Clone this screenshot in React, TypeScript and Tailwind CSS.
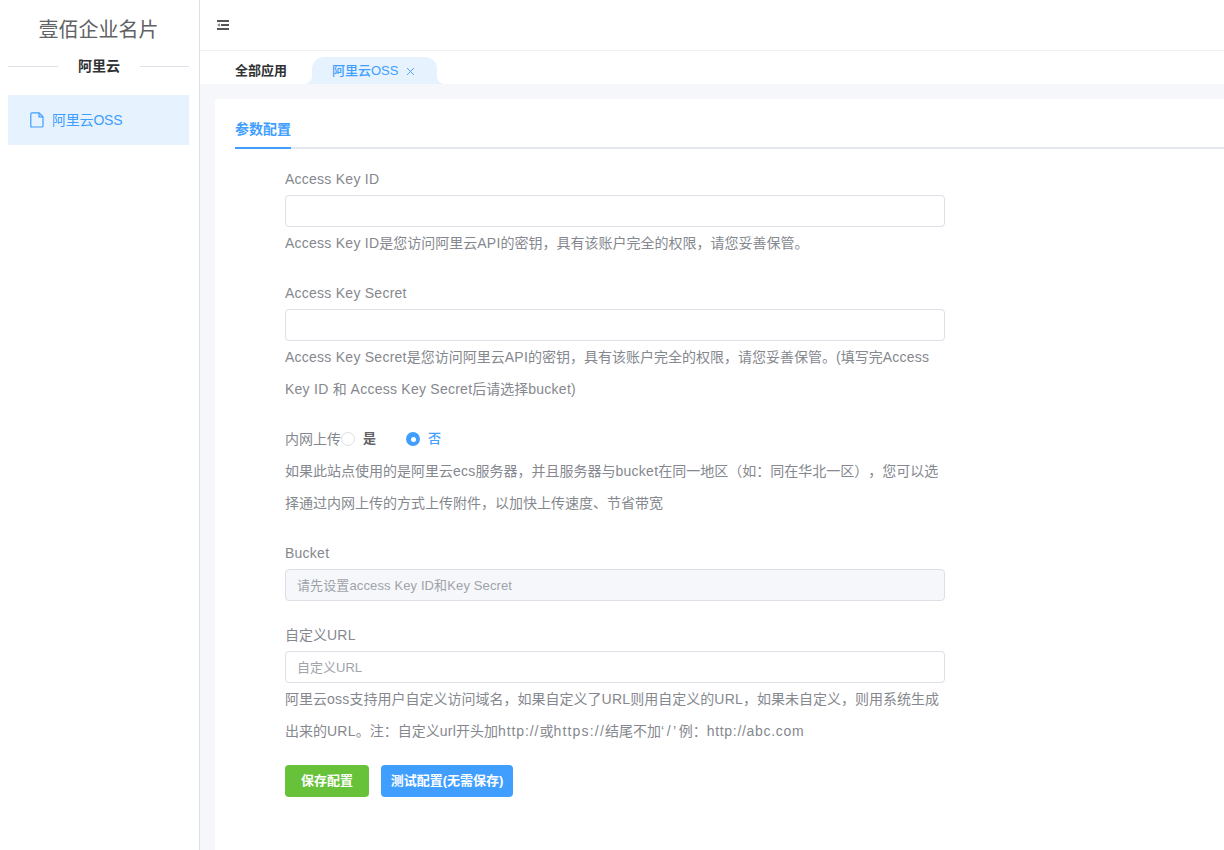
import React from "react";

const fontStack = { fontFamily: '"Liberation Sans", "Noto Sans CJK SC", sans-serif' };

// latin runs are a little wider in the reference than in Liberation Sans
const Mixed = ({ text }: { text: string }) => (
  <>
    {text.split(/([A-Za-z][A-Za-z ]*)/).map((part, i) =>
      /[A-Za-z]/.test(part) ? (
        <span key={i} className="tracking-[0.25px]">
          {part}
        </span>
      ) : (
        <span key={i}>{part}</span>
      )
    )}
  </>
);

const Line = ({ children }: { children: React.ReactNode }) => (
  <div className="w-[660px] whitespace-nowrap text-sm leading-8 text-[#85888e]">{children}</div>
);

const Field = ({ label, hint, placeholder, disabled }: { label: string; hint?: React.ReactNode; placeholder?: string; disabled?: boolean }) => (
  <div>
    <div className="h-8 text-sm leading-8 text-[#85888e]">
      <Mixed text={label} />
    </div>
    <input
      disabled={disabled}
      placeholder={placeholder}
      className={`block h-8 w-[660px] rounded border border-[#dcdfe6] px-[11px] text-[13px] outline-none placeholder:text-[#a0a3a9] ${disabled ? "bg-[#f5f7fa] tracking-[0.12px]" : "bg-white"}`}
    />
    {hint}
  </div>
);

export default function App() {
  return (
    <div className="flex h-[850px] w-full overflow-hidden bg-white [text-spacing-trim:space-all]" style={fontStack}>
      {/* sidebar */}
      <aside className="w-[200px] shrink-0 border-r border-[#dcdfe6] pl-2 pr-[10px]">
        <div className="h-[60px] pt-[17px] text-center text-xl leading-[26px] text-[#606266]">壹佰企业名片</div>
        <div className="flex h-3 items-center">
          <div className="h-px w-[50px] bg-[#dfe1ea]" />
          <div className="flex-1 text-center text-sm font-bold text-[#303133]">阿里云</div>
          <div className="h-px w-[49px] bg-[#dfe1ea]" />
        </div>
        <div className="mt-[23px] flex h-[50px] items-center bg-[#e6f2fe] pl-[22px] text-sm text-[#409eff]">
          <svg width="14" height="16" viewBox="0 0 14 16" fill="none" stroke="currentColor" strokeWidth="1.2" className="mr-2">
            <path d="M2 .8h7l4 4v9a1.2 1.2 0 0 1-1.2 1.2H2A1.2 1.2 0 0 1 .8 14.800V2A1.200 1.200 0 0 1 2 .8z" />
            <path d="M9 .8v4h4" />
          </svg>
          <span className="tracking-[-0.2px]">阿里云OSS</span>
        </div>
      </aside>

      <div className="flex min-w-0 flex-1 flex-col">
        {/* top bar */}
        <div className="flex h-[51px] shrink-0 items-center border-b border-[#f0f1f3] pl-[17px]">
          <svg width="12" height="10" viewBox="0 0 12 10" fill="#555">
            <rect x="0" y="0" width="12" height="2" />
            <rect x="4" y="4" width="8" height="2" />
            <path d="M0 5 3 3.200v3.600z" fill="#888" />
            <rect x="0" y="8" width="12" height="2" />
          </svg>
        </div>

        {/* tabs */}
        <div className="flex h-[33px] shrink-0 pl-[35px] pt-[6px] text-[13px]">
          <div className="flex w-[77px] items-center font-bold text-[#303133]">全部应用</div>
          <div className="relative flex w-[125px] items-center rounded-t-xl bg-[#e6f2fe] pl-5 font-medium text-[#409eff]">
            <span className="absolute bottom-0 left-[-7px] h-[7px] w-[7px] bg-[radial-gradient(circle_at_0_0,transparent_6.5px,#e6f2fe_7px)]" />
            <span className="absolute bottom-0 right-[-7px] h-[7px] w-[7px] bg-[radial-gradient(circle_at_100%_0,transparent_6.5px,#e6f2fe_7px)]" />
            阿里云OSS
            <svg width="7" height="7" viewBox="0 0 7 7" stroke="currentColor" strokeWidth="0.9" className="ml-[9px] mt-px">
              <path d="M0 0l7 7M7 0L0 7" />
            </svg>
          </div>
        </div>

        {/* content */}
        <div className="flex-1 bg-[#f5f7fa] pl-[15px] pt-[15px]">
          <div className="h-full bg-white pl-5 pt-[10px]">
            <div className="h-[40px] border-b-2 border-[#e4e7ed]">
              <div className="inline-block h-[40px] border-b-2 border-[#409eff] text-sm font-bold leading-[40px] text-[#409eff]">参数配置</div>
            </div>

            <div className="ml-[50px] pt-[14px]">
              <Field
                label="Access Key ID"
                hint={
                  <Line>
                    <Mixed text="Access Key ID是您访问阿里云API的密钥，具有该账户完全的权限，请您妥善保管。" />
                  </Line>
                }
              />
              <div className="h-[18px]" />
              <Field
                label="Access Key Secret"
                hint={
                  <>
                    <Line>
                      <Mixed text="Access Key Secret是您访问阿里云API的密钥，具有该账户完全的权限，请您妥善保管。(填写完Access" />
                    </Line>
                    <Line>
                      <Mixed text="Key ID 和 Access Key Secret后请选择bucket)" />
                    </Line>
                  </>
                }
              />

              <div className="mt-[18px] flex h-8 items-center text-sm text-[#85888e]">
                内网上传
                <span className="h-[14px] w-[14px] rounded-full border border-[#dcdfe6] bg-white" />
                <span className="ml-2 text-[13px] font-bold text-[#606266]">是</span>
                <span className="ml-[30px] flex h-[14px] w-[14px] items-center justify-center rounded-full bg-[#409eff]">
                  <span className="h-[5px] w-[5px] rounded-full bg-white" />
                </span>
                <span className="ml-2 text-[13px] font-medium text-[#409eff]">否</span>
              </div>
              <Line>
                <Mixed text="如果此站点使用的是阿里云ecs服务器，并且服务器与bucket在同一地区（如：同在华北一区），您可以选" />
              </Line>
              <Line>择通过内网上传的方式上传附件，以加快上传速度、节省带宽</Line>

              <div className="h-[18px]" />
              <Field label="Bucket" disabled placeholder="请先设置access Key ID和Key Secret" />
              <div className="h-[18px]" />
              <Field
                label="自定义URL"
                placeholder="自定义URL"
                hint={
                  <>
                    <Line>
                      <Mixed text="阿里云oss支持用户自定义访问域名，如果自定义了URL则用自定义的URL，如果未自定义，则用系统生成" />
                    </Line>
                    <Line>
                      <Mixed text="出来的URL。注：自定义url开头加" />
                      <span className="tracking-[0.9px]">http://</span>
                      <span>或</span>
                      <span className="tracking-[1.2px]">https://</span>
                      <span>结尾不加</span>
                      <span className="tracking-[2.5px]">‘/’</span>
                      <span>例：</span>
                      <span className="tracking-[0.7px]">http://abc.com</span>
                    </Line>
                  </>
                }
              />

              <div className="mt-[18px] flex gap-3">
                <button className="h-8 w-[84px] rounded bg-[#67c23a] text-[13px] font-bold text-white">保存配置</button>
                <button className="h-8 w-[132px] rounded bg-[#409eff] text-[13px] font-bold text-white">测试配置(无需保存)</button>
              </div>
            </div>
          </div>
        </div>
      </div>
    </div>
  );
}
